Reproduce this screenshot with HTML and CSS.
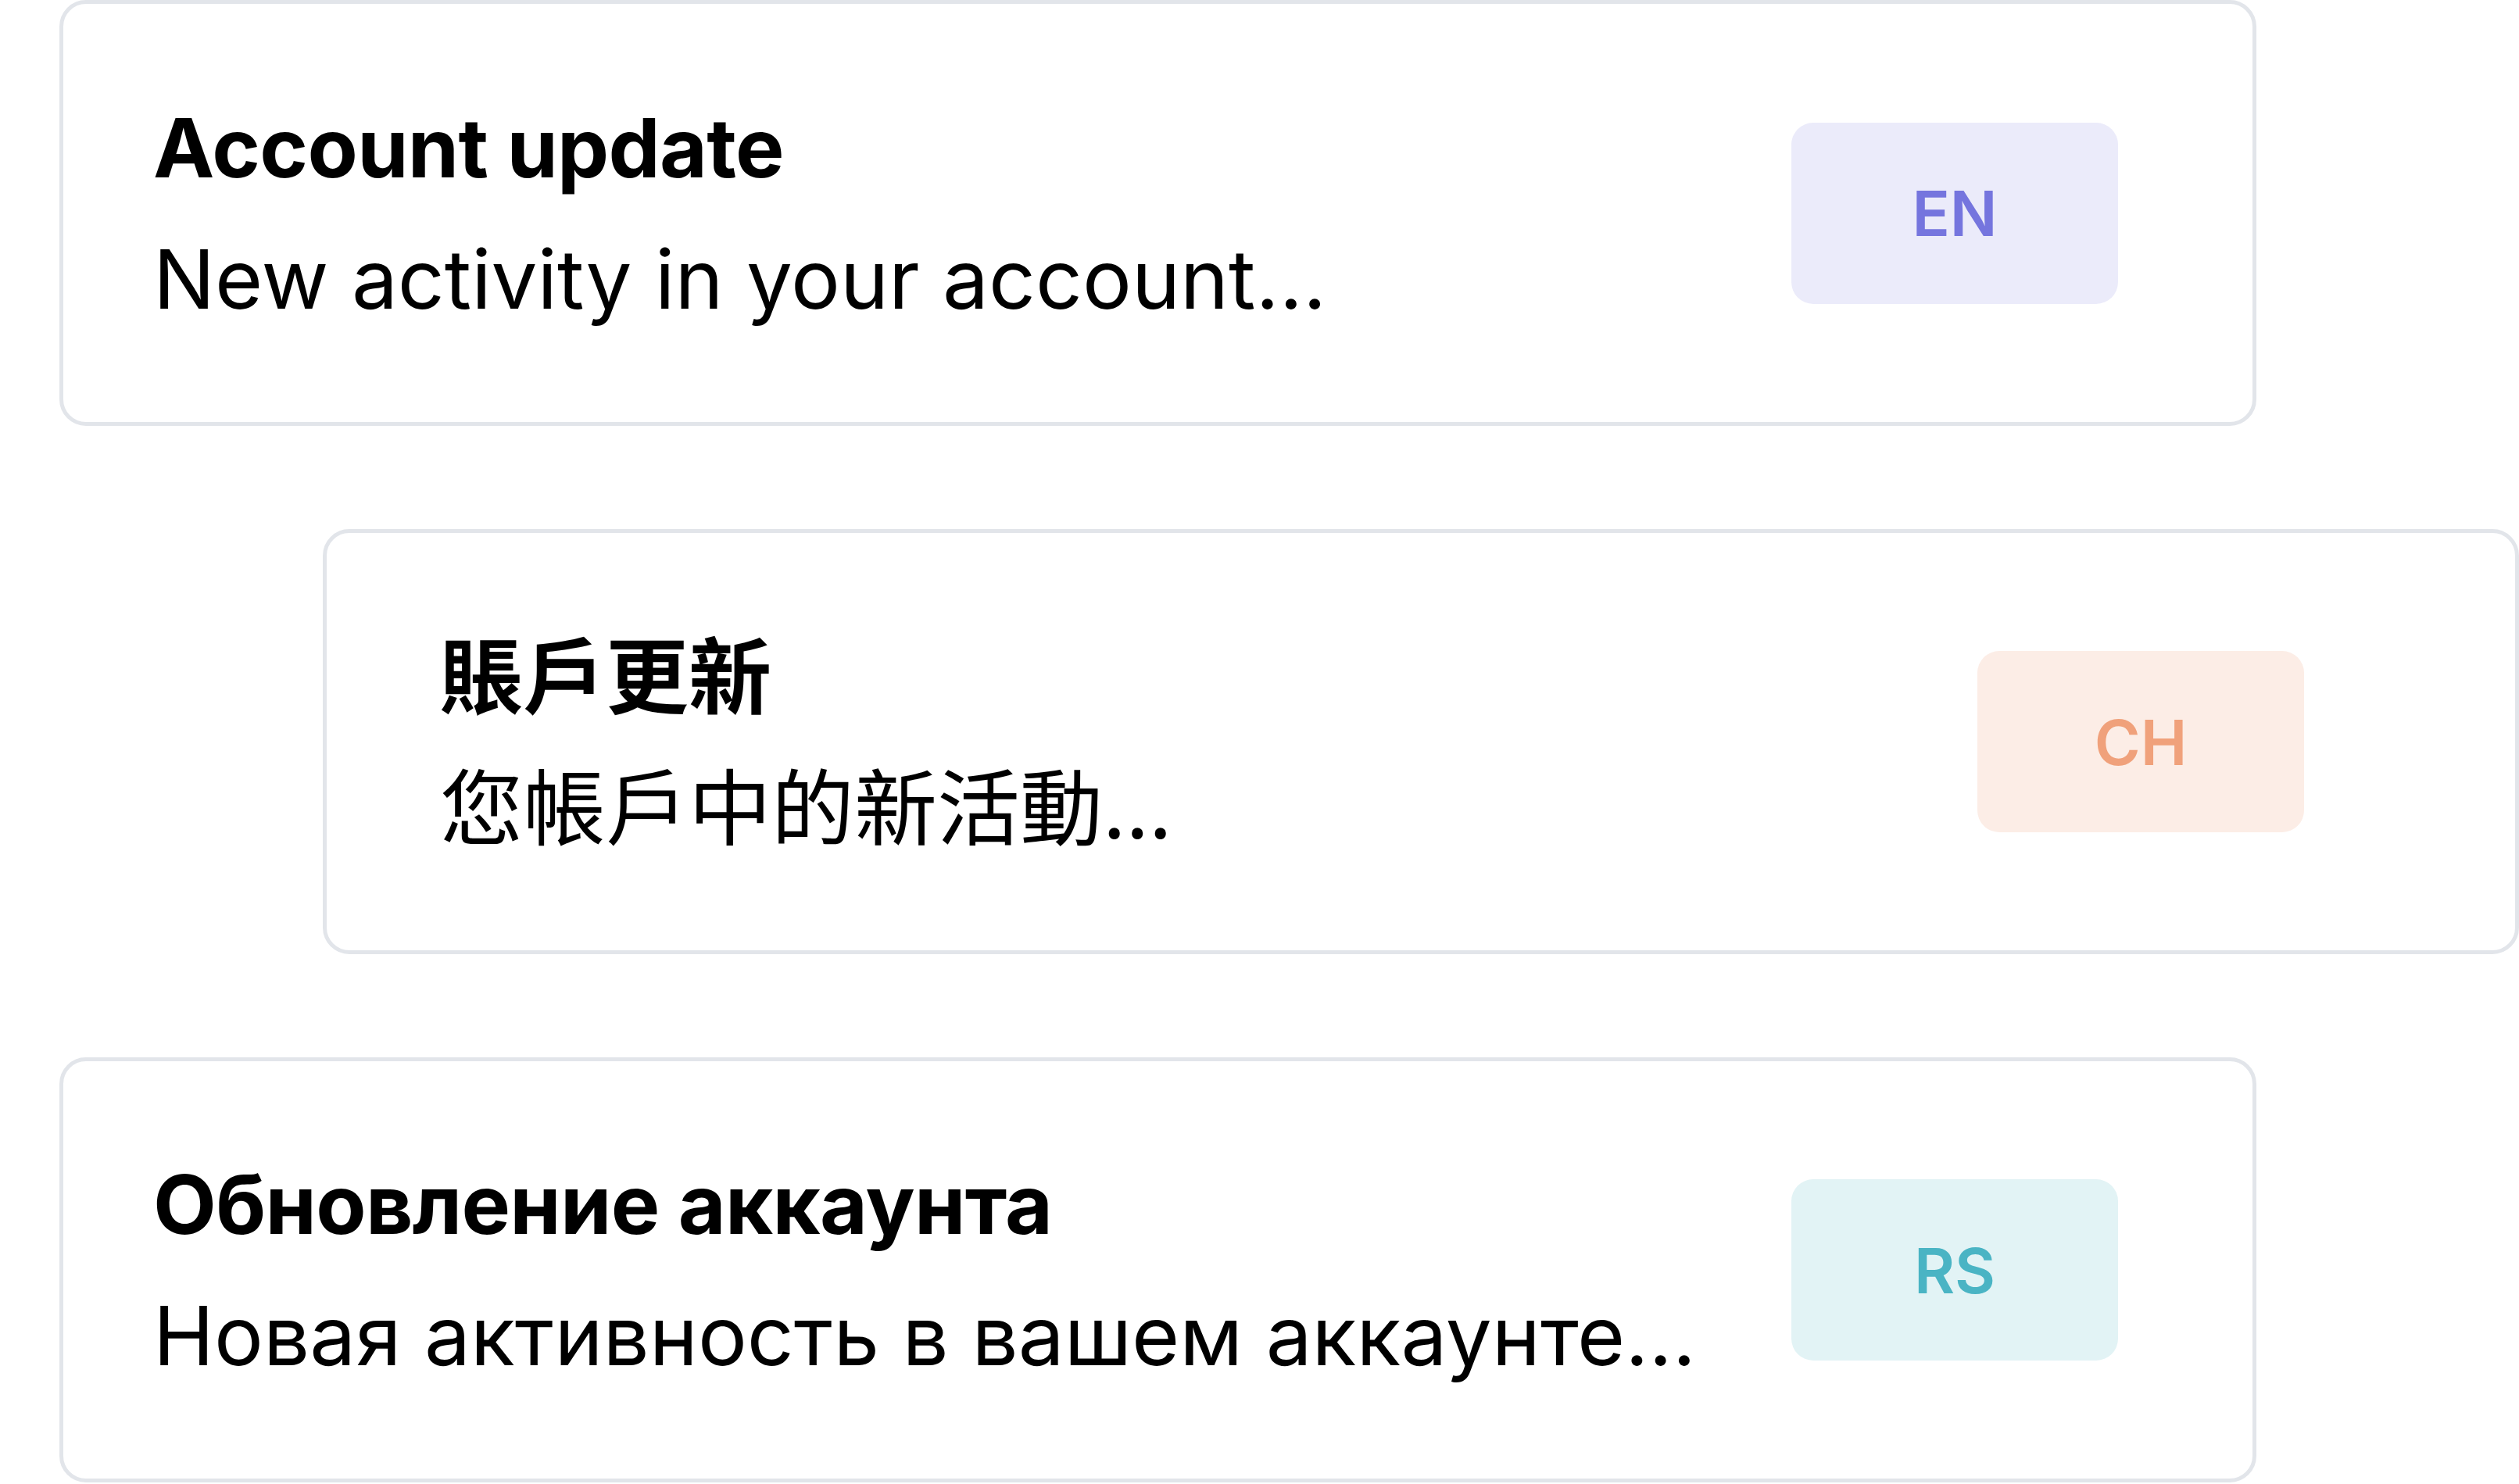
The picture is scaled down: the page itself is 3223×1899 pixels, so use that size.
FILE: index.html
```html
<!DOCTYPE html>
<html lang="en">
<head>
<meta charset="utf-8">
<title>Account update</title>
<link rel="stylesheet" href="styles.css">
</head>
<body>
<main class="stack">
  <section class="card card-en">
    <div class="text">
      <h2 class="title">Account update</h2>
      <p class="body">New activity in your account...</p>
    </div>
    <div class="badge badge-en">EN</div>
  </section>
  <section class="card card-ch">
    <div class="text">
      <h2 class="title" lang="zh-Hant">賬戶更新</h2>
      <p class="body" lang="zh-Hant">您帳戶中的新活動...</p>
    </div>
    <div class="badge badge-ch">CH</div>
  </section>
  <section class="card card-rs">
    <div class="text">
      <h2 class="title" lang="ru">Обновление аккаунта</h2>
      <p class="body" lang="ru">Новая активность в вашем аккаунте...</p>
    </div>
    <div class="badge badge-rs">RS</div>
  </section>
</main>
</body>
</html>
```
FILE: styles.css
```css
html, body {
  margin: 0;
  padding: 0;
  background: #ffffff;
}
body {
  width: 3223px;
  height: 1899px;
  overflow: hidden;
  font-family: Inter, "Noto Sans CJK TC", sans-serif;
  color: #000000;
}
.stack {
  display: flex;
  flex-direction: column;
  gap: 132px;
  padding-left: 76px;
}
.card {
  box-sizing: border-box;
  width: 2811px;
  height: 545px;
  border: 5px solid #e2e5ea;
  border-radius: 34px;
  background: #ffffff;
  display: flex;
  align-items: center;
  padding: 0 172px 0 115px;
}
.card-ch {
  margin-left: 337px;
  width: 2810px;
  height: 544px;
  padding: 0 270px 0 145px;
}
.card-ch .text {
  margin-top: -12px;
}
.card-rs {
  height: 544px;
}
.text {
  flex: 1;
  min-width: 0;
}
.title {
  margin: 0;
  font-size: 105px;
  line-height: 168px;
  font-weight: 700;
  letter-spacing: -0.7px;
}
.body {
  margin: 0;
  font-size: 105px;
  line-height: 168px;
  font-weight: 400;
}
.card-ch .title,
.card-ch .body {
  font-family: "Noto Sans CJK TC", Inter, sans-serif;
  font-size: 106px;
  letter-spacing: 0;
}
.badge {
  flex: none;
  width: 418px;
  height: 232px;
  border-radius: 28px;
  display: flex;
  align-items: center;
  justify-content: center;
  font-size: 80px;
  font-weight: 600;
}
.badge-en {
  background: #ebebfa;
  color: #7575de;
}
.badge-ch {
  background: #fcede6;
  color: #f0a17b;
}
.badge-rs {
  background: #e2f3f5;
  color: #4ab4c4;
}
```
